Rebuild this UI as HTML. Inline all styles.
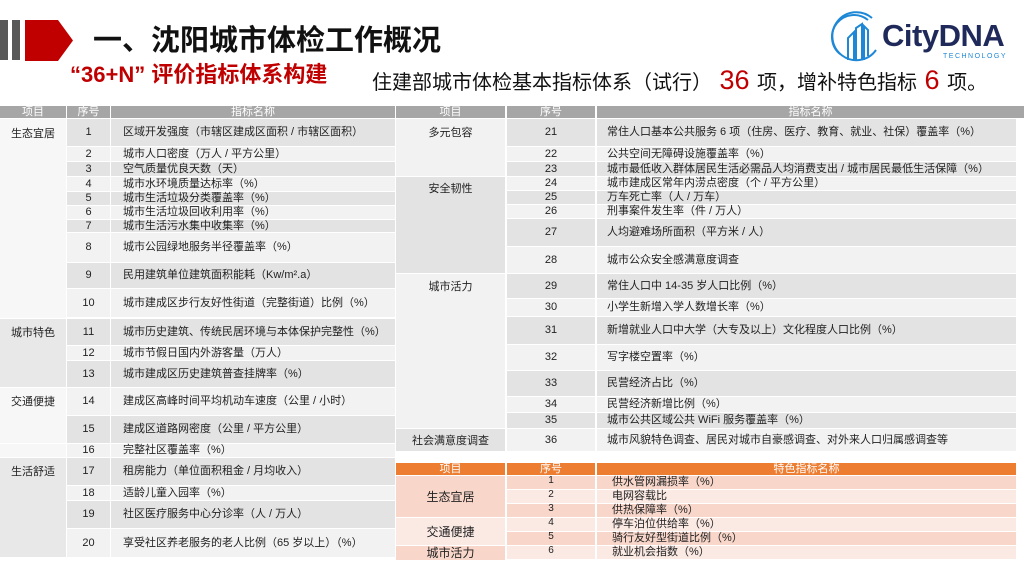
<!DOCTYPE html>
<html><head><meta charset="utf-8"><style>
*{margin:0;padding:0;box-sizing:border-box}
body{width:1024px;height:576px;background:#fff;position:relative;overflow:hidden;font-family:"Liberation Sans","Noto Sans CJK SC",sans-serif;color:#222}
.a{position:absolute}
.c{position:absolute;display:flex;align-items:center;font-size:11px;line-height:1;white-space:nowrap}
.n{justify-content:center}
.t{padding-left:12px}
.d{background:#e3e3e3}.l{background:#f2f2f2}
.h{background:#a6a6a6;color:#fff;justify-content:center;font-size:11px}
.o{background:#ed7d31;color:#fff;justify-content:center;font-size:11px}
.p1{background:#f8d6ca}.p2{background:#fbe9e3}
.cat{position:absolute;font-size:11px;display:flex;justify-content:center;white-space:nowrap}
</style></head><body>
<div class="a" style="left:0;top:20px;width:8px;height:40px;background:#595959"></div>
<div class="a" style="left:12px;top:20px;width:8px;height:40px;background:#595959"></div>
<svg class="a" style="left:25px;top:20px" width="50" height="41"><polygon points="0,0 33,0 48,20.5 33,41 0,41" fill="#c00000"/></svg>
<div class="a" style="left:93px;top:27px;font-size:29px;font-weight:bold;color:#111;line-height:1">一、沈阳城市体检工作概况</div>
<div class="a" style="left:70px;top:64px;font-size:22px;font-weight:bold;color:#c00000;line-height:1">“36+N” 评价指标体系构建</div>
<div class="a" style="left:372px;top:67px;font-size:20px;color:#111;line-height:26px;white-space:nowrap">住建部城市体检基本指标体系（试行）<span style="color:#c00000;font-size:27px"> 36 </span>项，增补特色指标<span style="color:#c00000;font-size:27px"> 6 </span>项。</div>
<svg class="a" style="left:828px;top:10px" width="56" height="56" viewBox="0 0 56 56" fill="none" stroke="#1e88d6" stroke-width="2"><path d="M44 8 A24 24 0 1 0 48 40"/><path d="M40 10 A20 20 0 0 0 12 44"/><path d="M20 50 V28 L26 22 V50 M28 50 V18 L34 14 V50 M36 50 V16 L40 20 V46"/></svg>
<div class="a" style="left:882px;top:20px;font-size:31px;font-weight:bold;color:#1f2a5a;line-height:1;letter-spacing:-0.5px">CityDNA</div>
<div class="a" style="left:943px;top:53px;font-size:7px;color:#1e88d6;letter-spacing:1.5px">TECHNOLOGY</div>

<div class="c h" style="left:0;top:106px;width:66px;height:12px">项目</div>
<div class="c h" style="left:67px;top:106px;width:43px;height:12px">序号</div>
<div class="c h" style="left:111px;top:106px;width:284px;height:12px">指标名称</div>
<div class="c h" style="left:396px;top:106px;width:109px;height:12px">项目</div>
<div class="c h" style="left:507px;top:106px;width:88px;height:12px">序号</div>
<div class="c h" style="left:597px;top:106px;width:427px;height:12px">指标名称</div>

<div class="cat l" style="left:0;top:119px;width:66px;height:199px;background:#f7f7f7;padding-top:6px">生态宜居</div>
<div class="cat" style="left:0;top:319px;width:66px;height:68px;background:#e8e8e8;padding-top:5px">城市特色</div>
<div class="cat" style="left:0;top:388px;width:66px;height:55px;background:#f7f7f7;padding-top:5px">交通便捷</div>
<div class="cat" style="left:0;top:444px;width:66px;height:13px;background:#f7f7f7"></div>
<div class="cat" style="left:0;top:458px;width:66px;height:99px;background:#e8e8e8;padding-top:5px">生活舒适</div>

<div id="L"></div>
<div class="cat" style="left:396px;top:119px;width:109px;height:57px;background:#f2f2f2;padding-top:5px">多元包容</div>
<div class="cat" style="left:396px;top:177px;width:109px;height:96px;background:#e3e3e3;padding-top:3px">安全韧性</div>
<div class="cat" style="left:396px;top:274px;width:109px;height:154px;background:#f2f2f2;padding-top:4px">城市活力</div>
<div class="cat" style="left:396px;top:429px;width:109px;height:22px;background:#e3e3e3;align-items:center">社会满意度调查</div>

<script>
var L=[[119,27,1,"区域开发强度（市辖区建成区面积 / 市辖区面积）"],[147,14,2,"城市人口密度（万人 / 平方公里）"],[162,14,3,"空气质量优良天数（天）"],[177,14,4,"城市水环境质量达标率（%）"],[192,13,5,"城市生活垃圾分类覆盖率（%）"],[206,13,6,"城市生活垃圾回收利用率（%）"],[220,12,7,"城市生活污水集中收集率（%）"],[233,29,8,"城市公园绿地服务半径覆盖率（%）"],[263,25,9,"民用建筑单位建筑面积能耗（Kw/m².a）"],[289,28,10,"城市建成区步行友好性街道（完整街道）比例（%）"],[319,26,11,"城市历史建筑、传统民居环境与本体保护完整性（%）"],[346,14,12,"城市节假日国内外游客量（万人）"],[361,26,13,"城市建成区历史建筑普查挂牌率（%）"],[388,27,14,"建成区高峰时间平均机动车速度（公里 / 小时）"],[416,27,15,"建成区道路网密度（公里 / 平方公里）"],[444,13,16,"完整社区覆盖率（%）"],[458,27,17,"租房能力（单位面积租金 / 月均收入）"],[486,14,18,"适龄儿童入园率（%）"],[501,27,19,"社区医疗服务中心分诊率（人 / 万人）"],[529,28,20,"享受社区养老服务的老人比例（65 岁以上）（%）"]];
var R=[[119,27,21,"常住人口基本公共服务 6 项（住房、医疗、教育、就业、社保）覆盖率（%）"],[147,14,22,"公共空间无障碍设施覆盖率（%）"],[162,14,23,"城市最低收入群体居民生活必需品人均消费支出 / 城市居民最低生活保障（%）"],[177,13,24,"城市建成区常年内涝点密度（个 / 平方公里）"],[191,13,25,"万车死亡率（人 / 万车）"],[205,13,26,"刑事案件发生率（件 / 万人）"],[219,27,27,"人均避难场所面积（平方米 / 人）"],[247,26,28,"城市公众安全感满意度调查"],[274,24,29,"常住人口中 14-35 岁人口比例（%）"],[299,17,30,"小学生新增入学人数增长率（%）"],[317,27,31,"新增就业人口中大学（大专及以上）文化程度人口比例（%）"],[345,25,32,"写字楼空置率（%）"],[371,25,33,"民营经济占比（%）"],[397,15,34,"民营经济新增比例（%）"],[413,15,35,"城市公共区域公共 WiFi 服务覆盖率（%）"],[429,22,36,"城市风貌特色调查、居民对城市自豪感调查、对外来人口归属感调查等"]];
var h="";
L.forEach(function(r,i){var k=i%2?"l":"d";h+='<div class="c n '+k+'" style="left:67px;top:'+r[0]+'px;width:43px;height:'+r[1]+'px">'+r[2]+'</div><div class="c t '+k+'" style="left:111px;top:'+r[0]+'px;width:284px;height:'+r[1]+'px">'+r[3]+'</div>';});
R.forEach(function(r,i){var k=i%2?"l":"d";h+='<div class="c n '+k+'" style="left:507px;top:'+r[0]+'px;width:88px;height:'+r[1]+'px">'+r[2]+'</div><div class="c t '+k+'" style="left:597px;top:'+r[0]+'px;width:419px;height:'+r[1]+'px;padding-left:10px">'+r[3]+'</div>';});
var O=["供水管网漏损率（%）","电网容载比","供热保障率（%）","停车泊位供给率（%）","骑行友好型街道比例（%）","就业机会指数（%）"];
O.forEach(function(s,i){var k=i%2?"p2":"p1",t=476+i*14;h+='<div class="c n '+k+'" style="left:507px;top:'+t+'px;width:88px;height:13px;align-items:flex-start;font-size:10px">'+(i+1)+'</div><div class="c '+k+'" style="left:597px;top:'+t+'px;width:419px;height:13px;padding-left:15px">'+s+'</div>';});
document.getElementById("L").outerHTML=h;
</script>
<div class="c o" style="left:396px;top:463px;width:109px;height:12px">项目</div>
<div class="c o" style="left:507px;top:463px;width:88px;height:12px">序号</div>
<div class="c o" style="left:597px;top:463px;width:419px;height:12px">特色指标名称</div>
<div class="c n p1" style="left:396px;top:476px;width:109px;height:41px;font-size:12px">生态宜居</div>
<div class="c n p2" style="left:396px;top:518px;width:109px;height:27px;font-size:12px">交通便捷</div>
<div class="c n p1" style="left:396px;top:546px;width:109px;height:14px;font-size:12px">城市活力</div>
</body></html>
